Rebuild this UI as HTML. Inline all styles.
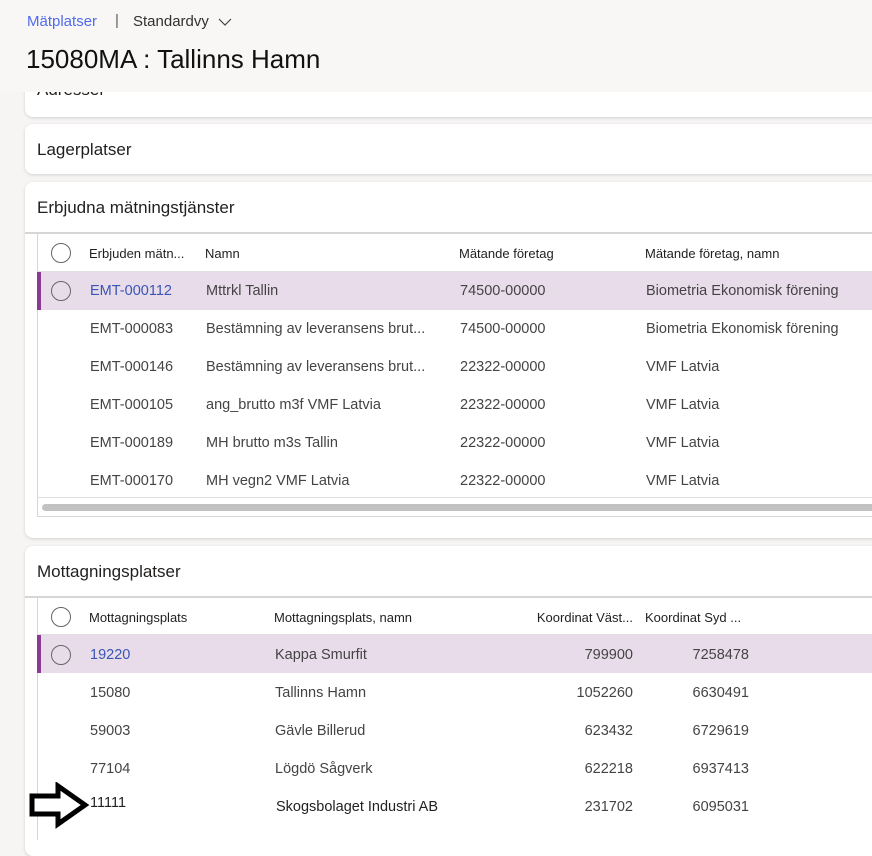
<!DOCTYPE html>
<html><head><meta charset="utf-8"><style>
*{margin:0;padding:0;box-sizing:border-box}
body{width:872px;height:840px;overflow:hidden;background:#f6f5f4;font-family:"Liberation Sans",sans-serif;position:relative;color:#323130}
.a{position:absolute;white-space:nowrap}
.card{position:absolute;left:25px;width:860px;background:#fff;border-radius:8px;box-shadow:0 1px 3px rgba(0,0,0,.15)}
.t{font-size:17px;color:#201f1e}
.h{font-size:13px;color:#201f1e}
.c{font-size:14.5px;color:#444}
.sel{position:absolute;left:37px;width:840px;height:38px;background:#e8dcea;border-left:4px solid #8a3a94}
.circ{position:absolute;width:20px;height:20px;border:1.5px solid #666;border-radius:50%}
.line{position:absolute;height:1px;background:#e1dfdd}
.r{text-align:right}
</style></head><body>
<div class="a" style="left:27px;top:13px;font-size:15px;color:#4f6bed">Mätplatser</div>
<div class="a" style="left:115px;top:12px;font-size:15px;color:#605e5c">|</div>
<div class="a" style="left:133px;top:13px;font-size:15px;color:#323130">Standardvy</div>
<svg class="a" style="left:217px;top:16px" width="14" height="10"><path d="M1 2 L7 8 L13 2" fill="none" stroke="#444" stroke-width="1.2"/></svg>
<div class="a" style="left:26px;top:44px;font-size:26px;color:#111">15080MA : Tallinns Hamn</div>

<div class="card" style="top:60px;height:57px"></div>
<div class="a t" style="left:37px;top:80px">Adresser</div>
<div class="a" style="left:0;top:0;width:872px;height:92px;background:#f8f7f6"></div>
<div class="a t" style="left:37px;top:13px;display:none"></div>
<div class="a" style="left:27px;top:13px;font-size:15px;color:#4f6bed">Mätplatser</div>
<div class="a" style="left:115px;top:12px;font-size:15px;color:#605e5c">|</div>
<div class="a" style="left:133px;top:13px;font-size:15px;color:#323130">Standardvy</div>
<svg class="a" style="left:218px;top:17px" width="14" height="10"><path d="M1 2 L7 8 L13 2" fill="none" stroke="#444" stroke-width="1.2"/></svg>
<div class="a" style="left:26px;top:44px;font-size:26px;color:#111">15080MA : Tallinns Hamn</div>

<div class="card" style="top:124px;height:50px"></div>
<div class="a t" style="left:37px;top:140px">Lagerplatser</div>

<div class="card" style="top:182px;height:356px"></div>
<div class="a t" style="left:37px;top:198px">Erbjudna mätningstjänster</div>
<div class="line" style="left:25px;top:232px;width:850px;height:2px;background:#d8d6d4"></div>
<div class="a" style="left:37px;top:234px;width:1px;height:283px;background:#d8d6d4"></div>
<div class="circ" style="left:51px;top:243px"></div>
<div class="a h" style="left:89px;top:246px">Erbjuden mätn...</div>
<div class="a h" style="left:205px;top:246px">Namn</div>
<div class="a h" style="left:459px;top:246px">Mätande företag</div>
<div class="a h" style="left:645px;top:246px">Mätande företag, namn</div>
<div class="line" style="left:37px;top:271px;width:840px"></div>
<div class="sel" style="top:272px"></div>
<div class="circ" style="left:51px;top:281px"></div>
<div class="a c" style="left:90px;top:283px;color:#3a55b4">EMT-000112</div><div class="a c" style="left:206px;top:283px">Mttrkl Tallin</div><div class="a c" style="left:460px;top:283px">74500-00000</div><div class="a c" style="left:646px;top:283px">Biometria Ekonomisk förening</div>
<div class="a c" style="left:90px;top:321px">EMT-000083</div><div class="a c" style="left:206px;top:321px">Bestämning av leveransens brut...</div><div class="a c" style="left:460px;top:321px">74500-00000</div><div class="a c" style="left:646px;top:321px">Biometria Ekonomisk förening</div>
<div class="a c" style="left:90px;top:359px">EMT-000146</div><div class="a c" style="left:206px;top:359px">Bestämning av leveransens brut...</div><div class="a c" style="left:460px;top:359px">22322-00000</div><div class="a c" style="left:646px;top:359px">VMF Latvia</div>
<div class="a c" style="left:90px;top:397px">EMT-000105</div><div class="a c" style="left:206px;top:397px">ang_brutto m3f VMF Latvia</div><div class="a c" style="left:460px;top:397px">22322-00000</div><div class="a c" style="left:646px;top:397px">VMF Latvia</div>
<div class="a c" style="left:90px;top:435px">EMT-000189</div><div class="a c" style="left:206px;top:435px">MH brutto m3s Tallin</div><div class="a c" style="left:460px;top:435px">22322-00000</div><div class="a c" style="left:646px;top:435px">VMF Latvia</div>
<div class="a c" style="left:90px;top:473px">EMT-000170</div><div class="a c" style="left:206px;top:473px">MH vegn2 VMF Latvia</div><div class="a c" style="left:460px;top:473px">22322-00000</div><div class="a c" style="left:646px;top:473px">VMF Latvia</div>
<div class="line" style="left:37px;top:497px;width:840px"></div>
<div class="a" style="left:42px;top:504px;width:840px;height:7px;border-radius:4px;background:#c2c2c2"></div>
<div class="line" style="left:37px;top:516px;width:840px;background:#d8d6d4"></div>

<div class="card" style="top:546px;height:310px"></div>
<div class="a t" style="left:37px;top:562px">Mottagningsplatser</div>
<div class="line" style="left:25px;top:596px;width:850px;height:2px;background:#d8d6d4"></div>
<div class="a" style="left:37px;top:598px;width:1px;height:242px;background:#d8d6d4"></div>
<div class="circ" style="left:51px;top:607px"></div>
<div class="a h" style="left:89px;top:610px">Mottagningsplats</div>
<div class="a h" style="left:274px;top:610px">Mottagningsplats, namn</div>
<div class="a h r" style="left:500px;top:610px;width:133px">Koordinat Väst...</div>
<div class="a h" style="left:645px;top:610px">Koordinat Syd ...</div>
<div class="line" style="left:37px;top:634px;width:840px"></div>
<div class="sel" style="top:635px"></div>
<div class="circ" style="left:51px;top:645px"></div>
<div class="a c" style="left:90px;top:647px;color:#3a55b4">19220</div><div class="a c" style="left:275px;top:647px">Kappa Smurfit</div><div class="a c r" style="left:500px;top:647px;width:133px">799900</div><div class="a c r" style="left:640px;top:647px;width:109px">7258478</div>
<div class="a c" style="left:90px;top:685px">15080</div><div class="a c" style="left:275px;top:685px">Tallinns Hamn</div><div class="a c r" style="left:500px;top:685px;width:133px">1052260</div><div class="a c r" style="left:640px;top:685px;width:109px">6630491</div>
<div class="a c" style="left:90px;top:723px">59003</div><div class="a c" style="left:275px;top:723px">Gävle Billerud</div><div class="a c r" style="left:500px;top:723px;width:133px">623432</div><div class="a c r" style="left:640px;top:723px;width:109px">6729619</div>
<div class="a c" style="left:90px;top:761px">77104</div><div class="a c" style="left:275px;top:761px">Lögdö Sågverk</div><div class="a c r" style="left:500px;top:761px;width:133px">622218</div><div class="a c r" style="left:640px;top:761px;width:109px">6937413</div>
<div class="a c" style="left:90px;top:795px;color:#222">11111</div><div class="a c" style="left:276px;top:799px;color:#222">Skogsbolaget Industri AB</div><div class="a c r" style="left:500px;top:799px;width:133px">231702</div><div class="a c r" style="left:640px;top:799px;width:109px">6095031</div>
<svg class="a" style="left:28px;top:782px" width="62" height="48"><path d="M4 14 H30 V4 L57 23 L30 42 V32 H4 Z" fill="#fff" stroke="#000" stroke-width="5" stroke-linejoin="miter"/></svg>
</body></html>
